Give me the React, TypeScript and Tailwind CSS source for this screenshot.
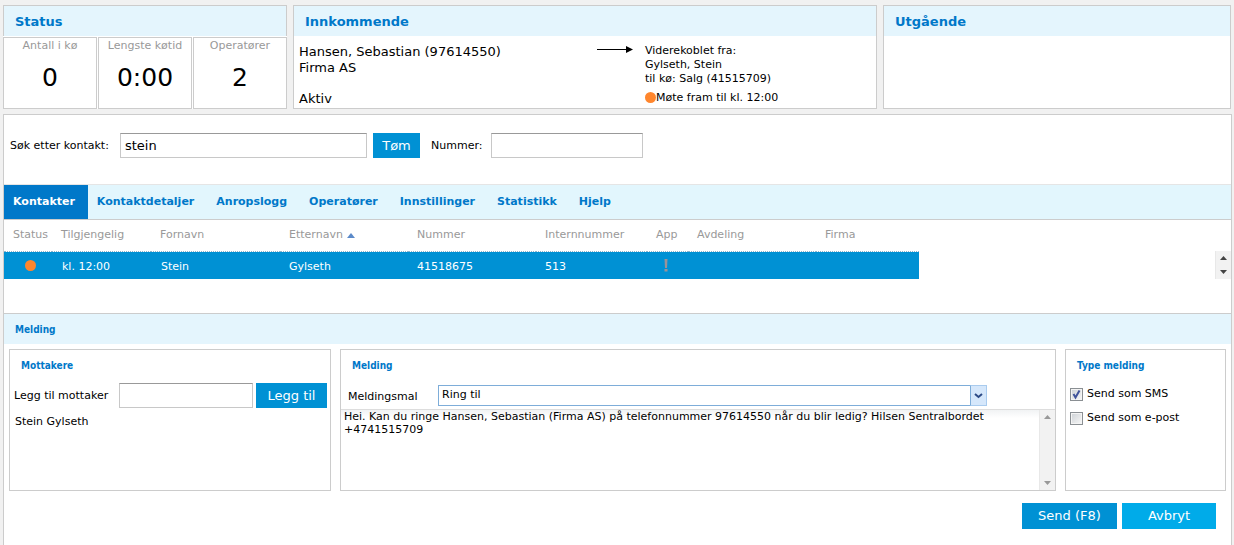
import clsx from 'clsx'
import { ReactNode, useState } from 'react'

const tabs = [
  'Kontakter',
  'Kontaktdetaljer',
  'Anropslogg',
  'Operatører',
  'Innstillinger',
  'Statistikk',
  'Hjelp',
]

const stats = [
  { label: 'Antall i kø', value: '0' },
  { label: 'Lengste køtid', value: '0:00' },
  { label: 'Operatører', value: '2' },
]

const columns = [
  { name: 'Status', width: 'w-[48px]' },
  { name: 'Tilgjengelig', width: 'w-[99px]' },
  { name: 'Fornavn', width: 'w-[129px]' },
  { name: 'Etternavn', width: 'w-[128px]', sorted: true },
  { name: 'Nummer', width: 'w-[128px]' },
  { name: 'Internnummer', width: 'w-[111px]' },
  { name: 'App', width: 'w-[41px]' },
  { name: 'Avdeling', width: 'w-[128px]' },
  { name: 'Firma', width: 'w-[103px]' },
]

const inputStyle =
  'h-[25px] border border-[#c8c8c8] border-t-[#999] bg-white px-1 text-[13px] outline-none'
const buttonStyle = 'bg-[#0091d4] text-[13px] text-white'

type PanelProps = {
  title: string
  children?: ReactNode
}

const Panel = (props: PanelProps) => {
  return (
    <section className="flex flex-col border border-[#ccc] bg-white">
      <h2 className="bg-[#e4f5fd] pt-px pl-[11px] text-[13px] leading-[29px] font-bold text-[#0078c9]">
        {props.title}
      </h2>
      {props.children}
    </section>
  )
}

const SmallTitle = (props: { children: ReactNode }) => {
  return (
    <h3 className="pt-2 pl-[11px] font-['DejaVu_Sans_Condensed','DejaVu_Sans',sans-serif] text-[10px] leading-4 font-bold text-[#0078c9]">
      {props.children}
    </h3>
  )
}

const Dot = () => {
  return (
    <span className="inline-block size-[11px] shrink-0 rounded-full bg-[#ff862d]" />
  )
}

const Scroller = (props: { muted?: boolean }) => {
  const color = props.muted ? 'text-[#999]' : 'text-[#444]'
  return (
    <div
      className={clsx(
        'flex w-4 shrink-0 flex-col justify-between border-l border-[#e8e8e8] bg-[#f2f2f2]',
        color
      )}
    >
      <button
        aria-label="Rull opp"
        className="flex h-[14px] items-center justify-center"
      >
        <svg width="7" height="4" viewBox="0 0 7 4" fill="currentColor">
          <path d="M3.5 0 7 4H0z" />
        </svg>
      </button>
      <button
        aria-label="Rull ned"
        className="flex h-[14px] items-center justify-center"
      >
        <svg width="7" height="4" viewBox="0 0 7 4" fill="currentColor">
          <path d="M0 0h7L3.5 4z" />
        </svg>
      </button>
    </div>
  )
}

type CheckProps = {
  label: string
  checked: boolean
  onChange: (checked: boolean) => void
}

const Check = (props: CheckProps) => {
  return (
    <label className="flex h-6 items-center gap-1">
      <span className="relative size-[13px]">
        <input
          type="checkbox"
          checked={props.checked}
          onChange={(e) => props.onChange(e.target.checked)}
          className="block size-[13px] appearance-none border border-[#8a8f93] bg-linear-to-br from-[#cdd1d5] to-[#f8f8f8] shadow-[inset_0_0_0_1px_#f4f4f4]"
        />
        {props.checked && (
          <svg
            className="pointer-events-none absolute inset-0"
            width="13"
            height="13"
            viewBox="0 0 13 13"
            fill="none"
            stroke="#40539b"
            strokeWidth="2"
          >
            <path d="M3.5 6 5.5 9.5 9.5 2.5" />
          </svg>
        )}
      </span>
      {props.label}
    </label>
  )
}

const App = () => {
  const [active, setActive] = useState('Kontakter')
  const [search, setSearch] = useState('stein')
  const [sms, setSms] = useState(true)
  const [email, setEmail] = useState(false)

  return (
    <div className="flex min-h-screen flex-col bg-[#f1f1f1] pt-[5px] pr-[2px] pl-[3px] font-['DejaVu_Sans',Verdana,sans-serif] text-[11px] text-black">
      <div className="grid grid-cols-[284px_584fr_348fr] gap-[6px] pr-px">
        <section className="flex flex-col bg-white">
          <h2 className="border border-b-0 border-[#ccc] bg-[#e4f5fd] pt-px pl-[11px] text-[13px] leading-[29px] font-bold text-[#0078c9]">
            Status
          </h2>
          <div className="mt-px grid grow grid-cols-3 gap-px">
            {stats.map((stat) => (
              <div
                key={stat.label}
                className="border border-[#ccc] text-center"
              >
                <div className="leading-4 text-[#999]">{stat.label}</div>
                <div className="pt-1 text-[25px] leading-10">{stat.value}</div>
              </div>
            ))}
          </div>
        </section>

        <Panel title="Innkommende">
          <div className="flex h-[72px] pl-[5px]">
            <div className="w-[298px] pt-2 text-[13px] leading-4">
              <p>Hansen, Sebastian (97614550)</p>
              <p>Firma AS</p>
              <p className="mt-[15px]">Aktiv</p>
            </div>
            <svg
              className="mt-[9px] mr-3 shrink-0"
              width="36"
              height="9"
              viewBox="0 0 36 9"
            >
              <path d="M0 4.5h30" stroke="black" />
              <path d="M29 1 36 4.5 29 8z" />
            </svg>
            <div className="pt-2 leading-[14px]">
              <p>Viderekoblet fra:</p>
              <p>Gylseth, Stein</p>
              <p>til kø: Salg (41515709)</p>
              <p className="mt-1 flex items-center">
                <Dot />
                <span className="pt-px">Møte fram til kl. 12:00</span>
              </p>
            </div>
          </div>
        </Panel>

        <Panel title="Utgående" />
      </div>

      <main className="mt-[5px] flex grow flex-col border border-b-0 border-[#ccc] bg-white">
        <div className="flex items-center pt-[18px] pb-[26px] pl-[6px]">
          <label htmlFor="search" className="w-[110px] pt-0.5">
            Søk etter kontakt:
          </label>
          <input
            id="search"
            className={clsx(inputStyle, 'w-[247px]')}
            value={search}
            onChange={(e) => setSearch(e.target.value)}
          />
          <button
            className={clsx(buttonStyle, 'ml-[6px] h-[25px] w-[47px]')}
            onClick={() => setSearch('')}
          >
            Tøm
          </button>
          <label htmlFor="number" className="ml-[11px] w-[60px] pt-0.5">
            Nummer:
          </label>
          <input id="number" className={clsx(inputStyle, 'w-[152px]')} />
        </div>

        <nav className="flex border-t border-b border-t-[#e5e5e5] border-b-[#ccc] bg-[#e2f6fd]">
          {tabs.map((tab) => (
            <button
              key={tab}
              onClick={() => setActive(tab)}
              className={clsx(
                'h-[34px] pr-[13px] pl-[9px] font-bold',
                active === tab ? 'bg-[#0078c9] text-white' : 'text-[#0078c9]'
              )}
            >
              {tab}
            </button>
          ))}
        </nav>

        <div className="flex h-[93px] items-start justify-between">
          <table className="w-[915px] table-fixed border-separate border-spacing-0 text-left">
            <thead>
              <tr className="h-[32px] text-[#999]">
                {columns.map((col) => (
                  <th
                    key={col.name}
                    className={clsx(
                      col.width,
                      'border-b border-dotted border-[#8fb4cc] pl-[9px] font-normal'
                    )}
                  >
                    <span className="flex items-center gap-1">
                      {col.name}
                      {col.sorted && (
                        <svg width="8" height="5" viewBox="0 0 8 5">
                          <path d="M4 0 8 5H0z" fill="#5b8ac9" />
                        </svg>
                      )}
                    </span>
                  </th>
                ))}
              </tr>
            </thead>
            <tbody>
              <tr className="h-[27px] bg-[#0091d4] text-white">
                <td className="pl-[21px]">
                  <span className="flex">
                    <Dot />
                  </span>
                </td>
                <td className="pt-1 pl-[10px]">kl. 12:00</td>
                <td className="pt-1 pl-[10px]">Stein</td>
                <td className="pt-1 pl-[9px]">Gylseth</td>
                <td className="pt-1 pl-[9px]">41518675</td>
                <td className="pt-1 pl-[9px]">513</td>
                <td className="pl-[17px]">
                  <svg width="4" height="13" viewBox="0 0 4 13" fill="#9c9298">
                    <path d="M0.5 0h3l-.5 9H1z" />
                    <path d="M0.5 10h3v2.5h-3z" />
                  </svg>
                </td>
                <td />
                <td />
              </tr>
            </tbody>
          </table>
          <div className="mt-[31px] flex h-7">
            <Scroller />
          </div>
        </div>

        <h2 className="border-t border-[#ccc] bg-[#e4f5fd] pt-0.5 pl-[11px] font-['DejaVu_Sans_Condensed','DejaVu_Sans',sans-serif] text-[10px] leading-7 font-bold text-[#0078c9]">
          Melding
        </h2>

        <div className="grid h-[147px] grid-cols-[322px_1fr_161px] gap-[9px] pt-[5px] pr-[5px] pl-[5px]">
          <section className="border border-[#ccc]">
            <SmallTitle>Mottakere</SmallTitle>
            <div className="mt-[9px] flex items-center pr-[3px] pl-1">
              <label htmlFor="recipient" className="w-[105px] pt-0.5">
                Legg til mottaker
              </label>
              <input
                id="recipient"
                className={clsx(inputStyle, 'w-[134px]')}
              />
              <button
                className={clsx(buttonStyle, 'ml-[3px] h-[25px] w-[71px]')}
              >
                Legg til
              </button>
            </div>
            <p className="mt-[6px] pl-[5px] leading-4">Stein Gylseth</p>
          </section>

          <section className="flex flex-col border border-[#ccc]">
            <SmallTitle>Melding</SmallTitle>
            <div className="mt-[11px] mb-[3px] flex items-center pr-[68px] pl-[7px]">
              <label htmlFor="template" className="w-[90px] pt-1">
                Meldingsmal
              </label>
              <div className="relative grow">
                <select
                  id="template"
                  className="block h-[21px] w-full appearance-none border border-[#7eadd9] bg-white pl-[3px] outline-none"
                >
                  <option>Ring til</option>
                </select>
                <span className="pointer-events-none absolute inset-y-0 right-0 flex w-[17px] items-center justify-center border border-[#a9cbee] border-l-[#7eadd9] bg-[#d5e7fb]">
                  <svg
                    width="9"
                    height="6"
                    viewBox="0 0 9 6"
                    fill="none"
                    stroke="#2c4a86"
                    strokeWidth="2"
                  >
                    <path d="M1 1 4.5 4 8 1" />
                  </svg>
                </span>
              </div>
            </div>
            <div className="flex grow border-t border-[#ddd]">
              <textarea
                aria-label="Meldingstekst"
                className="grow resize-none bg-linear-to-b from-[#f1f3f4] to-white to-10% px-[3px] leading-[13px] outline-none"
                defaultValue="Hei. Kan du ringe Hansen, Sebastian (Firma AS) på telefonnummer 97614550 når du blir ledig? Hilsen Sentralbordet +4741515709"
              />
              <Scroller muted />
            </div>
          </section>

          <section className="border border-[#ccc]">
            <SmallTitle>Type melding</SmallTitle>
            <div className="mt-2 pl-1">
              <Check label="Send som SMS" checked={sms} onChange={setSms} />
              <Check
                label="Send som e-post"
                checked={email}
                onChange={setEmail}
              />
            </div>
          </section>
        </div>

        <div className="mt-3 flex justify-end gap-[5px] pr-[15px] pb-4">
          <button className={clsx(buttonStyle, 'h-[26px] w-[95px]')}>
            Send (F8)
          </button>
          <button className="h-[26px] w-[94px] bg-[#00abe9] text-[13px] text-white">
            Avbryt
          </button>
        </div>
      </main>
    </div>
  )
}

export default App
